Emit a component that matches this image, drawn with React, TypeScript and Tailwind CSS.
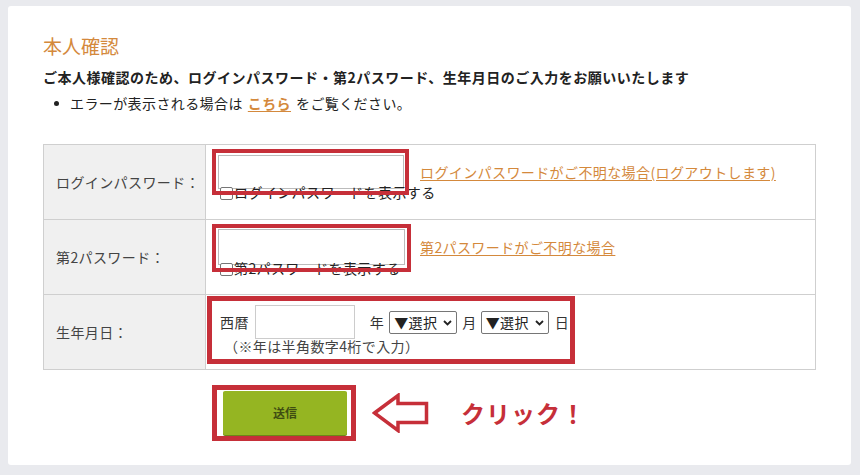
import React from 'react';

const RED = 'border-[#c62f39]';

const FakeSelect: React.FC = () => (
  <div className="flex h-[23px] w-[68px] items-center justify-between rounded-[2px] border border-[#767676] bg-white pl-[4px] pr-[4px] text-[14px] text-[#222]">
    <span>▼選択</span>
    <svg width="9" height="6" viewBox="0 0 9 6" className="mt-[1px]">
      <path d="M1 1 L4.5 4.5 L8 1" fill="none" stroke="#222" strokeWidth="1.8" />
    </svg>
  </div>
);

const Checkbox: React.FC<{ label: string }> = ({ label }) => (
  <label className="flex items-center text-[14px] leading-[16px] tracking-[0.4px] text-[#222]">
    <span className="mr-[1px] mt-[4px] inline-block h-[13px] w-[13px] rounded-[2px] border border-[#767676] bg-white" />
    {label}
  </label>
);

export default function App() {
  return (
    <div
      className="h-[475px] w-[860px] overflow-hidden bg-[#e9eaee] pl-[8px] pt-[6px]"
      style={{ fontFamily: '"Noto Sans CJK JP", "Noto Sans", sans-serif' }}
    >
      <div className="h-[459px] w-[843px] rounded-[3px] bg-white pl-[35px] pt-[28px]">
        <h1 className="h-[24px] text-[19px] leading-[24px] font-normal text-[#d4893c]">本人確認</h1>
        <p className="mt-[11px] h-[16px] text-[14px] leading-[16px] tracking-[0.5px] font-bold text-[#222]">
          ご本人様確認のため、ログインパスワード・第2パスワード、生年月日のご入力をお願いいたします
        </p>
        <div className="mt-[10px] flex h-[16px] items-center text-[14px] leading-[16px] tracking-[0.4px] text-[#222]">
          <span className="ml-[11px] mr-[11px] inline-block h-[5px] w-[5px] rounded-full bg-[#222]" />
          <span>エラーが表示される場合は</span>
          <span className="mx-[5px] font-bold text-[#d4893c] underline underline-offset-2">こちら</span>
          <span>をご覧ください。</span>
        </div>

        <div className="mt-[33px] w-[773px] border border-[#cfcfcf] text-[14px] tracking-[0.4px]">
          {/* row 1 */}
          <div className="flex h-[75px] border-b border-[#cfcfcf]">
            <div className="flex w-[161px] items-center bg-[#f0f0f0] pl-[12px] text-[#444]">ログインパスワード：</div>
            <div className="relative flex-1 border-l border-[#cfcfcf] pl-[12px] pt-[10px]">
              <div className="flex items-center">
                <div className="h-[34px] w-[186px] border border-[#bbb] bg-white" />
                <a className="ml-[16px] text-[#d4893c] underline underline-offset-2">
                  ログインパスワードがご不明な場合(ログアウトします)
                </a>
              </div>
              <div className="ml-[2px] -mt-[6px]">
                <Checkbox label="ログインパスワードを表示する" />
              </div>
              <div className={`absolute left-[6px] top-[4px] h-[46px] w-[197px] border-[4px] ${RED}`} />
            </div>
          </div>
          {/* row 2 */}
          <div className="flex h-[75px] border-b border-[#cfcfcf]">
            <div className="flex w-[161px] items-center bg-[#f0f0f0] pl-[12px] text-[#444]">第2パスワード：</div>
            <div className="relative flex-1 border-l border-[#cfcfcf] pl-[12px] pt-[9px]">
              <div className="flex items-center">
                <div className="h-[36px] w-[187px] border border-[#bbb] bg-white" />
                <a className="ml-[15px] text-[#d4893c] underline underline-offset-2">
                  第2パスワードがご不明な場合
                </a>
              </div>
              <div className="ml-[2px] -mt-[6px]">
                <Checkbox label="第2パスワードを表示する" />
              </div>
              <div className={`absolute left-[6px] top-[4px] h-[48px] w-[199px] border-[4px] ${RED}`} />
            </div>
          </div>
          {/* row 3 */}
          <div className="flex h-[74px]">
            <div className="flex w-[161px] items-center bg-[#f0f0f0] pl-[12px] text-[#444]">生年月日：</div>
            <div className="relative flex-1 border-l border-[#cfcfcf] pl-[14px] pt-[10px]">
              <div className="flex items-center text-[#333]">
                <span>西暦</span>
                <div className="ml-[6px] h-[34px] w-[100px] border border-[#ccc] bg-white" />
                <span className="ml-[15px] mr-[5px]">年</span>
                <FakeSelect />
                <span className="ml-[5px] mr-[4px]">月</span>
                <FakeSelect />
                <span className="ml-[6px]">日</span>
              </div>
              <div className="-mt-[1px] ml-[4px] leading-[16px] text-[#444]">（※年は半角数字4桁で入力）</div>
              <div className={`absolute left-[1px] top-[1px] h-[68px] w-[368px] border-[5px] ${RED}`} />
            </div>
          </div>
        </div>

        <div className="mt-[15px] flex items-center">
          <div className={`ml-[169px] h-[56px] w-[144px] border-[5px] ${RED} p-[1px] pl-[6px]`}>
            <button className="flex h-[44px] w-[124px] items-center justify-center rounded-[2px] bg-[#95b522] text-[12px] font-bold text-[#3f4d12] shadow-[0_1px_0_#6d8618]">
              送信
            </button>
          </div>
          <svg width="58" height="40" viewBox="0 0 58 40" className="ml-[16px]">
            <path
              d="M2.5 20 L26 2.5 L26 10.5 L54.5 10.5 L54.5 29.5 L26 29.5 L26 37.5 Z"
              fill="none"
              stroke="#c62f39"
              strokeWidth="3.5"
              strokeLinejoin="miter"
            />
          </svg>
          <span className="ml-[31px] text-[24px] font-bold tracking-[1px] text-[#c62f39]">クリック！</span>
        </div>
      </div>
    </div>
  );
}
